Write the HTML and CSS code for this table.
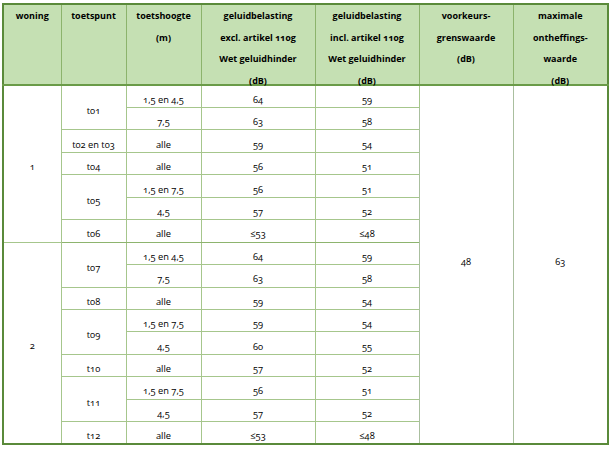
FILE: index.html
```html
<!DOCTYPE html>
<html lang="nl">
<head>
<meta charset="utf-8">
<title>Geluidbelasting</title>
<link rel="stylesheet" href="styles.css">
</head>
<body>
<div class="wrap">
<table class="t">
<colgroup>
<col class="c1"><col class="c2"><col class="c3"><col class="c4"><col class="c5"><col class="c6"><col class="c7">
</colgroup>
<thead>
<tr>
<th><div class="h">woning</div></th>
<th><div class="h">toetspunt</div></th>
<th><div class="h">toetshoogte<br>(m)</div></th>
<th><div class="h">geluidbelasting<br>excl. artikel 110g<br>Wet geluidhinder<br>(dB)</div></th>
<th><div class="h">geluidbelasting<br>incl. artikel 110g<br>Wet geluidhinder<br>(dB)</div></th>
<th><div class="h">voorkeurs-<br>grenswaarde<br>(dB)</div></th>
<th><div class="h">maximale<br>ontheffings-<br>waarde<br>(dB)</div></th>
</tr>
</thead>
<tbody>
<tr><td rowspan="7">1</td><td rowspan="2">t01</td><td>1,5 en 4,5</td><td>64</td><td>59</td><td rowspan="16" class="big">48</td><td rowspan="16" class="big">63</td></tr>
<tr><td>7,5</td><td>63</td><td>58</td></tr>
<tr><td>t02 en t03</td><td>alle</td><td>59</td><td>54</td></tr>
<tr><td>t04</td><td>alle</td><td>56</td><td>51</td></tr>
<tr><td rowspan="2">t05</td><td>1,5 en 7,5</td><td>56</td><td>51</td></tr>
<tr><td>4,5</td><td>57</td><td>52</td></tr>
<tr class="grp"><td>t06</td><td>alle</td><td>≤53</td><td>≤48</td></tr>
<tr><td rowspan="9">2</td><td rowspan="2">t07</td><td>1,5 en 4,5</td><td>64</td><td>59</td></tr>
<tr><td>7,5</td><td>63</td><td>58</td></tr>
<tr><td>t08</td><td>alle</td><td>59</td><td>54</td></tr>
<tr><td rowspan="2">t09</td><td>1,5 en 7,5</td><td>59</td><td>54</td></tr>
<tr><td>4,5</td><td>60</td><td>55</td></tr>
<tr><td>t10</td><td>alle</td><td>57</td><td>52</td></tr>
<tr><td rowspan="2">t11</td><td>1,5 en 7,5</td><td>56</td><td>51</td></tr>
<tr><td>4,5</td><td>57</td><td>52</td></tr>
<tr><td>t12</td><td>alle</td><td>≤53</td><td>≤48</td></tr>
</tbody>
</table>
</div>
</body>
</html>
```
FILE: styles.css
```css
html, body {
  margin: 0;
  padding: 0;
  background: #ffffff;
}
body {
  font-family: "Open Sans", "Liberation Sans", sans-serif;
  font-size: 9.3px;
  color: #000000;
  font-variant-numeric: oldstyle-nums;
  font-feature-settings: "onum" 1;
}
.wrap {
  padding: 3px 0 0 2px;
}
.t {
  border-collapse: collapse;
  table-layout: fixed;
  width: 606px;
  border: 2px solid #5a8a3a;
}
.c1 { width: 58px; }
.c2 { width: 65px; }
.c3 { width: 75px; }
.c4 { width: 114px; }
.c5 { width: 104px; }
.c6 { width: 94px; }
.c7 { width: 95px; }

.t th {
  background: #c5e0b3;
  font-size: 9px;
  font-weight: 700;
  vertical-align: top;
  text-align: center;
  padding: 0 2px;
  height: 79px;
  border-left: 1px solid #8cb36c;
  border-right: 1px solid #8cb36c;
  border-bottom: 2px solid #6a9b48;
}
.h {
  line-height: 21.6px;
  margin: 0 0 -12px;
}
.t tbody tr {
  height: 22.45px;
}
.t td {
  text-align: center;
  vertical-align: middle;
  padding: 7px 2px 0;
  line-height: 14px;
  border: 1px solid #a6c68c;
}
.t td.big {
  border-color: #aabf9f;
  padding-bottom: 12px;
}
.t tr.grp td {
  border-bottom-color: #8db46e;
}
```
